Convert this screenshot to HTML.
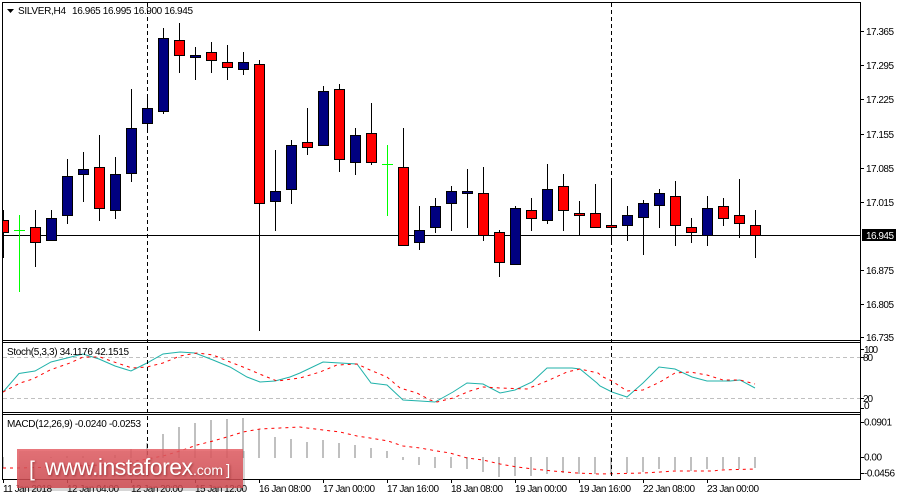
<!DOCTYPE html>
<html><head><meta charset="utf-8"><style>
html,body{margin:0;padding:0;background:#fff;width:900px;height:500px;overflow:hidden}
svg{display:block}
text{font-family:"Liberation Sans",sans-serif;font-size:10px;fill:#000}
.w{stroke:#000;stroke-width:1;fill:none;shape-rendering:crispEdges}
.r{fill:#f00;stroke:#000;shape-rendering:crispEdges}
.b{fill:#000080;stroke:#000;shape-rendering:crispEdges}
.t{fill:none;stroke:#20b2aa;stroke-width:1}
.d{fill:none;stroke:#f00;stroke-width:1;stroke-dasharray:3 4}
.lg{fill:#fff;filter:drop-shadow(1px 1px 1px rgba(90,0,0,.45))}
</style></head><body>
<svg width="900" height="500" viewBox="0 0 900 500" xmlns="http://www.w3.org/2000/svg">
<defs>
<linearGradient id="lg" x1="0" y1="0" x2="0" y2="1"><stop offset="0" stop-color="#e45f65"/><stop offset="1" stop-color="#cf4a50"/></linearGradient>
</defs>
<rect width="900" height="500" fill="#fff"/>
<!-- levels -->
<path d="M3 357.500H860M3 398.500H860" stroke="#c0c0c0" stroke-dasharray="4 3" fill="none" shape-rendering="crispEdges"/>
<!-- MACD bars -->
<path stroke="#c0c0c0" stroke-width="2" fill="none" shape-rendering="crispEdges" d="M3 457V468M51 457V458M67 456V458M83 456V458M115 455V458M131 449V458M147 443V458M163 434V458M179 427V458M195 423V458M211 420V458M227 419V458M243 418V458M259 429V458M275 437V458M291 439V458M307 442V458M323 440V458M339 443V458M355 445V458M371 448V458M387 451V458M403 457V460M419 457V465M435 457V468M451 457V468M467 457V469M483 457V472M499 457V477M515 457V476M531 457V476M547 457V474M563 457V473M579 457V474M595 457V474M611 457V473M627 457V473M643 457V472M659 457V469M675 457V470M691 457V471M707 457V469M723 457V469M739 457V469M755 457V468"/>
<!-- MACD signal -->
<polyline class="d" points="3,468 17,468 60,467 100,465 130,462 147,459 163,456 180,451 197,445 213,441 227,437 243,432 260,429 280,428 300,427 307,428 323,430 340,432 357,436 370,438 388,441 403,446 420,448 437,451 450,453 467,458 483,460 500,464 517,467 533,469 553,471 577,473 600,474 643,473 660,472 675,471 713,471 720,470 755,469"/>
<!-- Stochastic -->
<polyline class="t" points="3,392 19,373.500 35,371 51,362 67,358 83,354 99,359 115,366 131,371 147,363 163,354 180,352 195,353 213,360 230,367 247,377 260,382 275,381 290,377 300,373 323,362 340,363 357,364 371,383 387,385 403,400 420,401 435,402 453,392 467,383 483,384 500,393 515,390 532,382 547,368 572,368 580,369 597,383 600,386 612,392 627,397 643,383 659,367 675,369 692,377 707,381 730,381 740,380 755,388"/>
<polyline class="d" points="3,392 20,383 33,379 50,370 70,363 83,357 100,357 117,363 132,368 147,367 163,363 180,356 197,353 213,355 230,362 243,367 262,375 277,381 300,378 320,372 337,365 357,364 370,370 387,377 400,388 417,393 430,400 437,402 453,398 470,391 483,387 500,388 527,389 547,381 567,372 580,369 598,373 603,377 612,381 627,391 643,390 660,382 675,373 690,372 707,375 723,380 740,380 755,384"/>
<!-- current price line -->
<path d="M3 235.500H860" stroke="#000" fill="none" shape-rendering="crispEdges"/>
<!-- period separators -->
<path d="M147.500 3V479M611.500 3V479" stroke="#000" stroke-dasharray="4 3" fill="none" shape-rendering="crispEdges"/>
<!-- wicks -->
<path class="w" d="M3.500 210V258M35.500 210V267M51.500 210V241M67.500 159V224M83.500 152V202M99.500 135V221M115.500 157V219M131.500 89V182M147.500 98V131M163.500 28V114M179.500 23V73M195.500 47V80M211.500 42V73M227.500 45V80M243.500 52V75M259.500 60V331M275.500 150V231M291.500 140V204M307.500 108V155M323.500 86V146M339.500 84V172M355.500 128V175M371.500 103V165M403.500 128V246M419.500 206V250M435.500 198V233M451.500 186V231M467.500 169V228M483.500 167V241M499.500 230V277M515.500 206V264M531.500 198V231M547.500 164V224M563.500 174V231M579.500 201V235M595.500 184V228M611.500 181V245M627.500 206V241M643.500 200V255M659.500 189V228M675.500 181V246M691.500 218V243M707.500 196V246M723.500 198V226M739.500 179V238M755.500 210V258"/>
<path d="M3 210V258" stroke="#000" stroke-width="2" fill="none" shape-rendering="crispEdges"/>
<path d="M19.500 215V292M14 230.500H25M387.500 145V216M382 164.500H393" stroke="#00ff00" fill="none" shape-rendering="crispEdges"/>
<!-- red bodies -->
<g class="r">
<rect x="2.500" y="220.500" width="6" height="12"/>
<rect x="30.500" y="227.500" width="10" height="15"/>
<rect x="94.500" y="167.500" width="10" height="41"/>
<rect x="174.500" y="40.500" width="10" height="15"/>
<rect x="206.500" y="52.500" width="10" height="8"/>
<rect x="222.500" y="62.500" width="10" height="5"/>
<rect x="254.500" y="64.500" width="10" height="139"/>
<rect x="302.500" y="142.500" width="10" height="5"/>
<rect x="334.500" y="89.500" width="10" height="70"/>
<rect x="366.500" y="133.500" width="10" height="29"/>
<rect x="398.500" y="167.500" width="10" height="78"/>
<rect x="478.500" y="193.500" width="10" height="42"/>
<rect x="494.500" y="232.500" width="10" height="30"/>
<rect x="526.500" y="210.500" width="10" height="8"/>
<rect x="558.500" y="186.500" width="10" height="24"/>
<rect x="574.500" y="213.500" width="10" height="2"/>
<rect x="590.500" y="213.500" width="10" height="14"/>
<rect x="606.500" y="225.500" width="10" height="2"/>
<rect x="670.500" y="196.500" width="10" height="29"/>
<rect x="686.500" y="227.500" width="10" height="5"/>
<rect x="718.500" y="206.500" width="10" height="12"/>
<rect x="734.500" y="215.500" width="10" height="8"/>
<rect x="750.500" y="225.500" width="10" height="10"/>
</g>
<!-- blue bodies -->
<g class="b">
<rect x="46.500" y="218.500" width="10" height="22"/>
<rect x="62.500" y="176.500" width="10" height="39"/>
<rect x="78.500" y="169.500" width="10" height="5"/>
<rect x="110.500" y="174.500" width="10" height="36"/>
<rect x="126.500" y="128.500" width="10" height="45"/>
<rect x="142.500" y="108.500" width="10" height="15"/>
<rect x="158.500" y="38.500" width="10" height="73"/>
<rect x="190.500" y="55.500" width="10" height="2"/>
<rect x="238.500" y="62.500" width="10" height="7"/>
<rect x="270.500" y="191.500" width="10" height="10"/>
<rect x="286.500" y="145.500" width="10" height="44"/>
<rect x="318.500" y="91.500" width="10" height="54"/>
<rect x="350.500" y="135.500" width="10" height="27"/>
<rect x="414.500" y="230.500" width="10" height="12"/>
<rect x="430.500" y="206.500" width="10" height="21"/>
<rect x="446.500" y="191.500" width="10" height="12"/>
<rect x="462.500" y="191.500" width="10" height="2"/>
<rect x="510.500" y="208.500" width="10" height="56"/>
<rect x="542.500" y="189.500" width="10" height="31"/>
<rect x="622.500" y="215.500" width="10" height="10"/>
<rect x="638.500" y="203.500" width="10" height="14"/>
<rect x="654.500" y="193.500" width="10" height="12"/>
<rect x="702.500" y="208.500" width="10" height="27"/>
</g>
<!-- frames -->
<g fill="none" stroke="#000" shape-rendering="crispEdges">
<path d="M2.500 2.500H860.500V479.500H2.500Z"/>
<path d="M3 340.500H860M3 342.500H860M3 412.500H860M3 414.500H860"/>
<path d="M861 31.500h3M861 65.500h3M861 99.500h3M861 134.500h3M861 168.500h3M861 202.500h3M861 270.500h3M861 304.500h3M861 337.500h3M861 349.500h3M861 357.500h3M861 398.500h3M861 408.500h3M861 422.500h3M861 457.500h3M861 473.500h3"/>
<path d="M3.500 480v3M67.500 480v3M131.500 480v3M195.500 480v3M259.500 480v3M323.500 480v3M387.500 480v3M451.500 480v3M515.500 480v3M579.500 480v3M643.500 480v3M707.500 480v3"/>
</g>
<!-- header -->
<path d="M7 9h7l-3.500 4z" fill="#000"/>
<text x="18" y="14" textLength="48">SILVER,H4</text>
<text x="72" y="14" textLength="121">16.965 16.995 16.900 16.945</text>
<text x="7" y="355" textLength="122">Stoch(5,3,3) 34.1176 42.1515</text>
<text x="7" y="427" textLength="134">MACD(12,26,9) -0.0240 -0.0253</text>
<!-- price axis -->
<text x="866" y="35" textLength="28">17.365</text>
<text x="866" y="69" textLength="28">17.295</text>
<text x="866" y="103" textLength="28">17.225</text>
<text x="866" y="138" textLength="28">17.155</text>
<text x="866" y="172" textLength="28">17.085</text>
<text x="866" y="206" textLength="28">17.015</text>
<rect x="862" y="229" width="34" height="12" fill="#000"/>
<text x="866" y="239" textLength="28" style="fill:#fff">16.945</text>
<text x="866" y="274" textLength="28">16.875</text>
<text x="866" y="308" textLength="28">16.805</text>
<text x="866" y="341" textLength="28">16.735</text>
<text x="864" y="353" textLength="14">100</text>
<text x="863" y="361" textLength="10">80</text>
<text x="863" y="402" textLength="10">20</text>
<text x="864" y="409">0</text>
<text x="864" y="425.500" textLength="28">0.0901</text>
<text x="864" y="460.500" textLength="18">0.00</text>
<text x="864" y="476.500" textLength="31">-0.0456</text>
<!-- time axis -->
<text x="3" y="492" textLength="49">11 Jan 2018</text>
<text x="67" y="492" textLength="52">12 Jan 04:00</text>
<text x="131" y="492" textLength="52">12 Jan 20:00</text>
<text x="195" y="492" textLength="52">15 Jan 12:00</text>
<text x="259" y="492" textLength="52">16 Jan 08:00</text>
<text x="323" y="492" textLength="52">17 Jan 00:00</text>
<text x="387" y="492" textLength="52">17 Jan 16:00</text>
<text x="451" y="492" textLength="52">18 Jan 08:00</text>
<text x="515" y="492" textLength="52">19 Jan 00:00</text>
<text x="579" y="492" textLength="52">19 Jan 16:00</text>
<text x="643" y="492" textLength="52">22 Jan 08:00</text>
<text x="707" y="492" textLength="52">23 Jan 00:00</text>
<!-- watermark -->
<rect x="19" y="451" width="226" height="40" fill="#000" opacity=".16"/>
<rect x="17" y="449" width="226" height="39" fill="url(#lg)" opacity=".85"/>
<text class="lg" x="29" y="476" style="font-size:21px">[</text>
<text class="lg" x="45" y="475" textLength="148" style="font-size:23px">www.instaforex</text>
<text class="lg" x="193" y="475" textLength="30" style="font-size:14px">.com</text>
<text class="lg" x="226" y="475" style="font-size:15px">]</text>
</svg>
</body></html>
